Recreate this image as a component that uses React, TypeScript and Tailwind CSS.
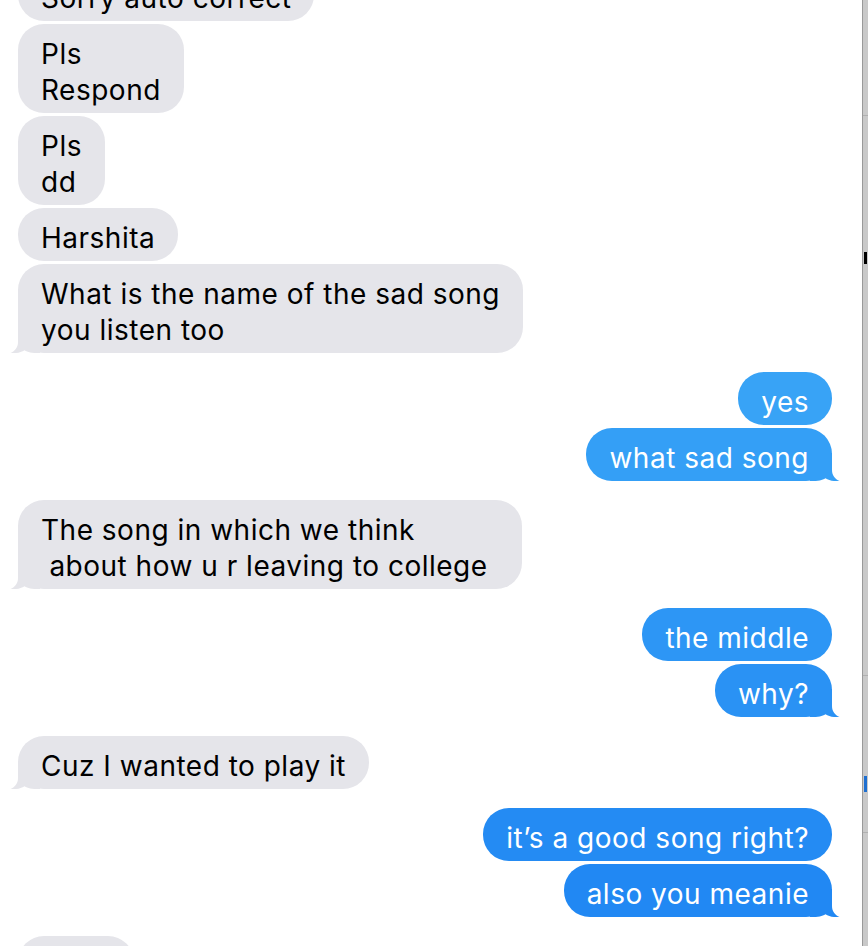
import React from "react";

type Msg = {
  text: string;
  me?: boolean;
  tail?: boolean;
  bg?: string;
  gapTop?: boolean;
  wide?: boolean;
};

const GRAY = "#e5e5ea";

const messages: Msg[] = [
  { text: "Sorry auto correct" },
  { text: "Pls\nRespond" },
  { text: "Pls\ndd" },
  { text: "Harshita" },
  { text: "What is the name of the sad song\nyou listen too", tail: true },
  { text: "yes", me: true, bg: "#38a3f6", gapTop: true },
  { text: "what sad song", me: true, tail: true, bg: "#349ff6" },
  { text: "The song in which we think\n about how u r leaving to college", tail: true, gapTop: true, wide: true },
  { text: "the middle", me: true, bg: "#2d96f5", gapTop: true },
  { text: "why?", me: true, tail: true, bg: "#2a92f4" },
  { text: "Cuz I wanted to play it", tail: true, gapTop: true },
  { text: "it\u2019s a good song right?", me: true, bg: "#248bf3", gapTop: true },
  { text: "also you meanie", me: true, tail: true, bg: "#2188f3" },
  { text: "Okay", gapTop: true },
];

function Tail({ me, color }: { me?: boolean; color: string }) {
  // corner filler + the little hook; mirrored for my own messages
  return (
    <svg
      width="30"
      height="28"
      viewBox="0 0 30 28"
      className={
        me
          ? "absolute bottom-0 right-[-8px] -scale-x-100"
          : "absolute bottom-0 left-[-8px]"
      }
    >
      <path
        d="M8 0 L8 17 C8 22.5 5 26 0.5 28 C6 28.6 11 27.4 14.5 25.2 C18 27.2 21 28 30 28 L30 0 Z"
        fill={color}
      />
    </svg>
  );
}

function Bubble({ m }: { m: Msg }) {
  const color = m.me ? m.bg || "#2d96f5" : GRAY;
  return (
    <div
      className={`flex w-full ${m.me ? "justify-end pr-[30px]" : "justify-start pl-[18px]"} ${
        m.gapTop ? "mt-[19px]" : "mt-[3px]"
      }`}
    >
      <div
        className={`relative rounded-[26px] px-[23px] pt-[12px] pb-[5px] text-[28px] leading-[36px] tracking-[0.5px] whitespace-pre ${
          m.me ? "text-white" : "text-black"
        } ${m.wide ? "w-[504px]" : ""}`}
        style={{ backgroundColor: color }}
      >
        {m.tail && <Tail me={m.me} color={color} />}
        <span className="relative">{m.text}</span>
      </div>
    </div>
  );
}

export default function App() {
  return (
    <div
      className="flex w-[868px] h-[946px] overflow-hidden bg-white"
      style={{ fontFamily: "Inter, 'Noto Sans', sans-serif" }}
    >
      <div className="flex-1 flex flex-col mt-[-35px]">
        {messages.map((m, i) => (
          <Bubble key={i} m={m} />
        ))}
      </div>

      {/* window edge strip */}
      <div className="flex flex-col w-[6px] h-full border-l border-[#9a9a9a] bg-[#c9c9c9]">
        <div className="h-[115px] shrink-0" />
        <div className="h-px bg-[#b0b0b0]" />
        <div className="h-[136px] shrink-0" />
        <div className="ml-[1px] w-[3px] h-[12px] bg-black" />
        <div className="h-[411px] shrink-0" />
        <div className="h-px bg-[#b0b0b0]" />
        <div className="h-[100px] shrink-0" />
        <div className="ml-[1px] w-[3px] h-[16px] bg-[#1e6fd0]" />
        <div className="h-[40px] shrink-0" />
        <div className="h-px bg-[#b0b0b0]" />
      </div>
    </div>
  );
}
